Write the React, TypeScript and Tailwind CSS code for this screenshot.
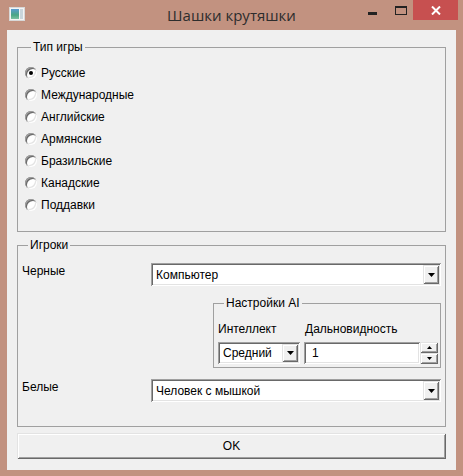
import React from "react";

const sunken =
  "shadow-[inset_1px_1px_0_#a0a0a0,inset_-1px_-1px_0_#ffffff,inset_2px_2px_0_#696969,inset_-2px_-2px_0_#e3e3e3]";
const raised =
  "shadow-[inset_1px_1px_0_#e3e3e3,inset_-1px_-1px_0_#696969,inset_2px_2px_0_#ffffff,inset_-2px_-2px_0_#a0a0a0]";

const gameTypes = [
  "Русские",
  "Международные",
  "Английские",
  "Армянские",
  "Бразильские",
  "Канадские",
  "Поддавки",
];

const Arrow = ({ up = false }: { up?: boolean }) => (
  <svg width="7" height="4" viewBox="0 0 7 4">
    <path d={up ? "M3.5 0 L7 4 L0 4 Z" : "M0 0 L7 0 L3.5 4 Z"} fill="#000" />
  </svg>
);

const Radio = ({ label, checked }: { label: string; checked?: boolean }) => (
  <div className="flex h-[22px] items-center gap-[4px]">
    <div
      className={`flex h-[12px] w-[12px] items-center justify-center rounded-full bg-white ${sunken}`}
    >
      {checked && <div className="h-[4px] w-[4px] rounded-full bg-black" />}
    </div>
    <span>{label}</span>
  </div>
);

const Combo = ({ value, className }: { value: string; className?: string }) => (
  <div className={`flex items-stretch bg-white p-[2px] ${sunken} ${className ?? ""}`}>
    <div className="flex flex-1 items-center pl-[3px]">{value}</div>
    <div className={`flex w-[16px] items-center justify-center bg-[#f0f0f0] ${raised}`}>
      <Arrow />
    </div>
  </div>
);

const Group = ({
  title,
  className,
  children,
}: {
  title: string;
  className?: string;
  children: React.ReactNode;
}) => (
  <fieldset className={`border border-[#a0a0a0] ${className ?? ""}`}>
    <legend className="ml-[6px] px-[2px] leading-[14px]">{title}</legend>
    {children}
  </fieldset>
);

const WindowIcon = () => (
  <svg width="16" height="14" viewBox="0 0 16 14">
    <rect x="0.5" y="0.5" width="15" height="13" fill="#f4f4f4" stroke="#d8d8d8" />
    <defs>
      <linearGradient id="ic" x1="0" y1="0" x2="0" y2="1">
        <stop offset="0" stopColor="#5a9bd0" />
        <stop offset="0.6" stopColor="#4aa584" />
        <stop offset="1" stopColor="#7cc0a0" />
      </linearGradient>
    </defs>
    <rect x="2" y="2" width="8" height="10" fill="url(#ic)" />
    <rect x="11" y="2" width="3" height="10" fill="#c9d6dc" />
  </svg>
);

export default function App() {
  return (
    <div className="flex h-[476px] w-[463px] flex-col bg-[#c29280] font-['Liberation_Sans',Arial,sans-serif] text-[12px] text-black">
      {/* title bar */}
      <div className="flex h-[30px] shrink-0 items-center">
        <div className="flex w-[120px] pl-[9px] pb-[2px]">
          <WindowIcon />
        </div>
        <div className="flex-1 text-center font-['Open_Sans',sans-serif] text-[15px] text-[#2d2d2d]">
          Шашки крутяшки
        </div>
        <div className="flex h-full w-[120px] items-start justify-end pr-[5px]">
          <div className="mt-[12px] mr-[18px] h-[3px] w-[9px] bg-[#222]" />
          <div className="mt-[6px] mr-[6px] h-[9px] w-[12px] border border-t-[2px] border-[#222]" />
          <div className="flex h-[20px] w-[45px] items-center justify-center bg-[#c75050]">
            <svg width="10" height="9" viewBox="0 0 10 9">
              <path d="M1 0.5 L9 8.5 M9 0.5 L1 8.5" stroke="#fff" strokeWidth="2" />
            </svg>
          </div>
        </div>
      </div>

      {/* client area */}
      <div className="mx-[7px] flex h-[440px] flex-col bg-[#f0f0f0] px-[10px] pt-[10px]">
        <Group title="Тип игры" className="pb-[15px] pl-[7px]">
          <div className="flex flex-col pt-[8px]">
            {gameTypes.map((t, i) => (
              <Radio key={t} label={t} checked={i === 0} />
            ))}
          </div>
        </Group>

        <Group title="Игроки" className="mt-[6px] pl-[4px] pr-[4px] pb-[24px]">
          <div className="flex flex-col pt-[11px]">
            <div className="flex items-start">
              <div className="mt-[1px] w-[129px] leading-[14px]">Черные</div>
              <Combo value="Компьютер" className="h-[23px] flex-1" />
            </div>

            <Group title="Настройки AI" className="mt-[10px] ml-[191px] pl-[4px] pr-[2px] pb-[3px]">
              <div className="flex flex-col pt-[12px]">
                <div className="flex leading-[14px]">
                  <div className="w-[87px]">Интеллект</div>
                  <div>Дальновидность</div>
                </div>
                <div className="mt-[6px] flex h-[22px]">
                  <Combo value="Средний" className="w-[82px]" />
                  <div className={`ml-[4px] flex flex-1 items-center bg-white pl-[8px] ${sunken}`}>1</div>
                  <div className="flex w-[18px] flex-col">
                    <div className={`flex flex-1 items-center justify-center bg-[#f0f0f0] ${raised}`}>
                      <svg width="5" height="3" viewBox="0 0 5 3">
                        <path d="M2.5 0 L5 3 L0 3 Z" fill="#000" />
                      </svg>
                    </div>
                    <div className={`flex flex-1 items-center justify-center bg-[#f0f0f0] ${raised}`}>
                      <svg width="5" height="3" viewBox="0 0 5 3">
                        <path d="M0 0 L5 0 L2.5 3 Z" fill="#000" />
                      </svg>
                    </div>
                  </div>
                </div>
              </div>
            </Group>

            <div className="mt-[11px] flex items-start">
              <div className="mt-[1px] w-[129px] leading-[14px]">Белые</div>
              <Combo value="Человек с мышкой" className="h-[23px] flex-1" />
            </div>
          </div>
        </Group>

        <button
          className={`mt-[6px] flex h-[26px] items-center justify-center bg-[#f0f0f0] ${raised}`}
        >
          OK
        </button>
      </div>
    </div>
  );
}
